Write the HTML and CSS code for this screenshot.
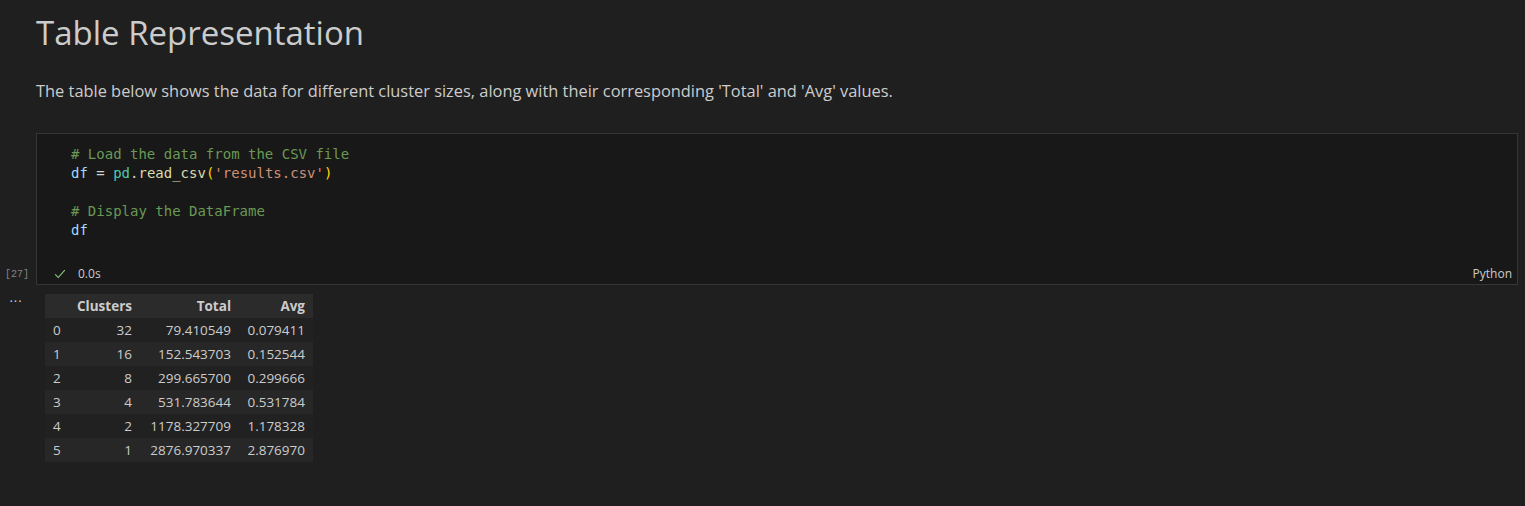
FILE: index.html
```html
<!DOCTYPE html>
<html lang="en">
<head>
<meta charset="utf-8">
<title>Table Representation</title>
<link rel="stylesheet" href="styles.css">
</head>
<body>
<div class="notebook">
  <section class="md-cell">
    <h1 class="md-title">Table Representation</h1>
    <p class="md-text">The table below shows the data for different cluster sizes, along with their corresponding 'Total' and 'Avg' values.</p>
  </section>

  <section class="code-cell">
    <div class="gutter">
      <span class="exec-count">[27]</span>
    </div>
    <div class="cell-box">
      <pre class="code"><span class="c-com"># Load the data from the CSV file</span>
<span class="c-var">df</span> <span class="c-op">=</span> <span class="c-cls">pd</span><span class="c-op">.</span><span class="c-fn">read_csv</span><span class="c-br">(</span><span class="c-str">'results.csv'</span><span class="c-br">)</span>

<span class="c-com"># Display the DataFrame</span>
<span class="c-var">df</span></pre>
      <div class="status">
        <svg class="check" width="14" height="14" viewBox="0 0 16 16"><path d="M2.5 8.5 L6 12 L13.5 3.5" fill="none" stroke="#89d185" stroke-width="1.2"/></svg>
        <span class="duration">0.0s</span>
        <span class="lang">Python</span>
      </div>
    </div>
  </section>

  <section class="output">
    <div class="gutter out-gutter"><span class="more">···</span></div>
    <table class="df">
      <thead>
        <tr><th class="idx"></th><th class="col-c">Clusters</th><th class="col-t">Total</th><th class="col-a">Avg</th></tr>
      </thead>
      <tbody>
        <tr><td class="idx">0</td><td>32</td><td>79.410549</td><td>0.079411</td></tr>
        <tr><td class="idx">1</td><td>16</td><td>152.543703</td><td>0.152544</td></tr>
        <tr><td class="idx">2</td><td>8</td><td>299.665700</td><td>0.299666</td></tr>
        <tr><td class="idx">3</td><td>4</td><td>531.783644</td><td>0.531784</td></tr>
        <tr><td class="idx">4</td><td>2</td><td>1178.327709</td><td>1.178328</td></tr>
        <tr><td class="idx">5</td><td>1</td><td>2876.970337</td><td>2.876970</td></tr>
      </tbody>
    </table>
  </section>
</div>
</body>
</html>
```

FILE: styles.css
```css
html, body {
  margin: 0;
  padding: 0;
  background: #1f1f1f;
  color: #cccccc;
  font-family: "Open Sans", "Noto Sans", sans-serif;
}

.notebook {
  width: 1525px;
  height: 506px;
  overflow: hidden;
}

.md-cell {
  padding: 11px 0 0 36px;
}

.md-title {
  margin: 0;
  font-size: 33px;
  font-weight: 400;
  line-height: 44px;
  color: #cccccc;
}

.md-text {
  margin: 25px 0 0 0;
  font-size: 16.4px;
  line-height: 22px;
  color: #cccccc;
}

.code-cell {
  display: flex;
  margin-top: 31px;
}

.gutter {
  width: 36px;
  flex: none;
  display: flex;
  flex-direction: column;
  justify-content: flex-end;
  align-items: center;
}

.exec-count {
  font-size: 10px;
  line-height: 22px;
  color: #858585;
  margin-bottom: -1px;
  padding-right: 2px;
  font-family: "Liberation Mono", monospace;
}

.cell-box {
  flex: 1;
  margin-right: 7px;
  background: #181818;
  border: 1px solid #353535;
}

.code {
  margin: 0;
  padding: 11px 0 0 34px;
  font-family: "DejaVu Sans Mono", monospace;
  font-size: 14px;
  line-height: 19px;
  color: #d4d4d4;
  height: 95px;
}

.c-com { color: #6a9955; }
.c-var { color: #9cdcfe; }
.c-op { color: #d4d4d4; }
.c-cls { color: #4ec9b0; }
.c-fn { color: #dcdcaa; }
.c-br { color: #ffd700; }
.c-str { color: #ce9178; }

.status {
  display: flex;
  align-items: center;
  height: 21px;
  margin-top: 22px;
  padding: 1px 5px 0 16px;
  font-size: 12px;
  color: #cccccc;
}

.check {
  display: block;
}

.duration {
  margin-left: 11px;
}

.lang {
  margin-left: auto;
}

.output {
  display: flex;
  margin-top: 9px;
}

.out-gutter {
  justify-content: flex-start;
}

.more {
  font-size: 13px;
  line-height: 14px;
  color: #cccccc;
  letter-spacing: 1px;
  padding-right: 4px;
}

.df {
  margin-left: 9px;
  border-collapse: collapse;
  table-layout: fixed;
  width: 268px;
  font-size: 13.5px;
  color: #cccccc;
}

.df th, .df td {
  box-sizing: border-box;
  height: 24px;
  padding: 0 8px;
  text-align: right;
  white-space: nowrap;
}

.df th {
  font-weight: 700;
}

.df thead tr {
  background: #2b2b2b;
}

.df tbody tr:nth-child(odd) {
  background: #212121;
}

.df tbody tr:nth-child(even) {
  background: #272727;
}

.df .idx {
  text-align: left;
  width: 24px;
}

.df .col-c { width: 71px; }
.df .col-t { width: 99px; }
.df .col-a { width: 74px; }
```
